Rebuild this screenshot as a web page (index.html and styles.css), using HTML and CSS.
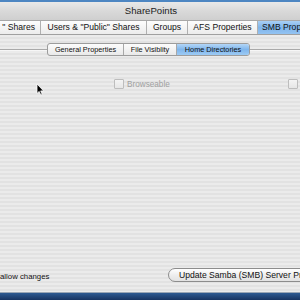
FILE: index.html
```html
<!DOCTYPE html>
<html>
<head>
<meta charset="utf-8">
<link rel="stylesheet" href="styles.css">
</head>
<body>
<div class="screen">
  <div class="top-strip"></div>
  <div class="window">
    <div class="titlebar">SharePoints</div>
    <div class="tabs">
      <div class="tab t1">" Shares</div>
      <div class="tab t2">Users &amp; "Public" Shares</div>
      <div class="tab t3">Groups</div>
      <div class="tab t4">AFS Properties</div>
      <div class="tab t5 selected">SMB Properties</div>
    </div>
    <div class="content">
      <div class="subtab-row">
        <span class="rule rule-left"></span>
        <div class="subtabs">
          <div class="subtab s1">General Properties</div>
          <div class="subtab s2">File Visiblity</div>
          <div class="subtab s3 selected">Home Directories</div>
        </div>
        <span class="rule rule-right"></span>
      </div>
      <div class="checks">
        <label class="check"><span class="box"></span><span class="check-label">Browseable</span></label>
        <label class="check"><span class="box"></span><span class="check-label">Oplocks</span></label>
      </div>
      <div class="spacer"></div>
      <div class="footer">
        <span class="allow">allow changes</span>
        <div class="update-btn">Update Samba (SMB) Server Properties</div>
      </div>
    </div>
  </div>
  <div class="desktop"></div>
  <svg class="cursor" width="9" height="13" viewBox="0 0 9 13">
    <path d="M1 1 L1 10.5 L3.2 8.4 L4.8 12 L6.2 11.4 L4.7 7.9 L7.6 7.9 Z" fill="#000" stroke="#fff" stroke-width="0.8" stroke-linejoin="round"/>
  </svg>
</div>
</body>
</html>
```
FILE: styles.css
```css
html, body {
  margin: 0;
  padding: 0;
}
body {
  width: 300px;
  height: 300px;
  overflow: hidden;
  font-family: "Liberation Sans", Arial, sans-serif;
  color: #111;
}
.screen {
  position: relative;
  width: 300px;
  height: 300px;
  display: flex;
  flex-direction: column;
  overflow: hidden;
  background: #1d3c6e;
}
.top-strip {
  height: 2px;
  background: #4d86c2;
}
.window {
  height: 290px;
  display: flex;
  flex-direction: column;
  background: #e8e8e8;
  border-bottom: 1px solid #9aa6b4;
}
.titlebar {
  height: 18px;
  line-height: 17px;
  text-align: center;
  font-size: 9.6px;
  color: #222;
  background: linear-gradient(to bottom, #e9e9e9 0%, #d9d9d9 50%, #cfcfcf 100%);
  padding-left: 2px;
}
.tabs {
  height: 13px;
  display: flex;
  background: linear-gradient(to bottom, #fdfdfd, #ececec);
  border-top: 1px solid #a8a8a8;
  border-bottom: 1px solid #a0a0a0;
  font-size: 8.6px;
  line-height: 13px;
  white-space: nowrap;
  overflow: hidden;
}
.tab {
  flex: none;
  border-right: 1px solid #b0b0b0;
  box-sizing: border-box;
  text-align: center;
  overflow: hidden;
}
.t1 { width: 41px; text-align: right; padding-right: 5px; }
.t2 { width: 106px; }
.t3 { width: 41px; }
.t4 { width: 70px; }
.t5 { width: 60px; text-align: left; padding-left: 4px; border-right: none; }
.tab.selected {
  background: linear-gradient(to bottom, #a9d0f5 0%, #7fb4ea 50%, #93c3f2 100%);
}
.content {
  flex: 1;
  display: flex;
  flex-direction: column;
  background: repeating-linear-gradient(to bottom, #ebebeb 0px, #ebebeb 2px, #e2e2e2 2px, #e2e2e2 4px);
}
.subtab-row {
  margin-top: 9px;
  height: 11px;
  display: flex;
  align-items: center;
}
.rule {
  height: 1px;
  background: #a9a9a9;
  border-bottom: 1px solid #f6f6f6;
}
.rule-left { width: 47px; }
.rule-right { flex: 1; }
.subtabs {
  display: flex;
  height: 11px;
  border: 1px solid #9c9c9c;
  border-radius: 3px;
  overflow: hidden;
  background: linear-gradient(to bottom, #fcfcfc, #e9e9e9);
  font-size: 7.3px;
  line-height: 11px;
  white-space: nowrap;
}
.subtab {
  box-sizing: border-box;
  text-align: center;
  border-right: 1px solid #a8a8a8;
}
.s1 { width: 76px; }
.s2 { width: 53px; }
.s3 { width: 72px; border-right: none; }
.subtab.selected {
  background: linear-gradient(to bottom, #b3d6f7 0%, #80b6ec 50%, #9ccaf4 100%);
}
.checks {
  margin-top: 24px;
  display: grid;
  grid-template-columns: 174px 40px;
  padding-left: 114px;
  height: 10px;
  white-space: nowrap;
}
.check {
  display: flex;
  align-items: center;
  gap: 3px;
  font-size: 8.2px;
  color: #a0a0a0;
}
.box {
  flex: none;
  width: 8px;
  height: 8px;
  border: 1px solid #bdbdbd;
  border-radius: 1px;
  background: linear-gradient(to bottom, #f4f4f4, #e6e6e6);
}
.spacer {
  flex: 1;
}
.footer {
  display: flex;
  align-items: center;
  height: 14px;
  margin-bottom: 10px;
  white-space: nowrap;
}
.allow {
  font-size: 7.8px;
  width: 168px;
  flex: none;
  margin-top: 2px;
}
.update-btn {
  flex: none;
  height: 12px;
  line-height: 12px;
  padding: 0 10px;
  font-size: 8.6px;
  border: 1px solid #8c8c8c;
  border-radius: 7px;
  background: linear-gradient(to bottom, #ffffff 0%, #eeeeee 50%, #e2e2e2 100%);
  color: #111;
}
.desktop {
  flex: 1;
  background: linear-gradient(to bottom, #2d5a91, #173360);
}
.cursor {
  position: absolute;
  left: 36px;
  top: 83px;
}
```
